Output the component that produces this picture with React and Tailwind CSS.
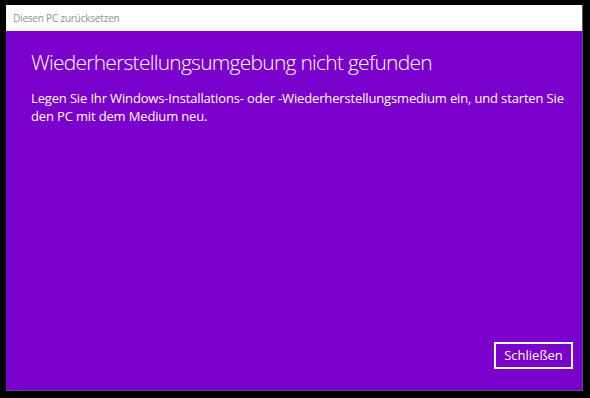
export default function App() {
  return (
    <div className="w-[590px] h-[398px] bg-black pt-[5px] pl-[6px] pr-[7px] pb-[7px]" style={{ fontFamily: '"Open Sans", "Noto Sans", sans-serif' }}>
      <div className="w-full h-full flex flex-col border border-[#5a5a5a] border-l-0 border-t-0">
        <div className="h-[26px] bg-white flex items-center pl-[7px] text-[10px] tracking-[-0.2px] text-[#8f8f8f] shrink-0">
          Diesen PC zurücksetzen
        </div>
        <div className="flex-1 bg-[#7a00cc] flex flex-col pl-[25px] pr-[9px] pb-[21px] pt-[16px] text-white">
          <div className="text-[21px] font-light leading-[30px] tracking-[-0.75px]">Wiederherstellungsumgebung nicht gefunden</div>
          <div className="mt-[12px] text-[13px] leading-[18px] tracking-[-0.15px]">
            Legen Sie Ihr Windows-Installations- oder -Wiederherstellungsmedium ein, und starten Sie den PC mit dem Medium neu.
          </div>
          <div className="mt-auto flex justify-end">
            <div className="w-[79px] h-[27px] border-2 border-white flex items-center justify-center text-[13px]">Schließen</div>
          </div>
        </div>
      </div>
    </div>
  );
}
